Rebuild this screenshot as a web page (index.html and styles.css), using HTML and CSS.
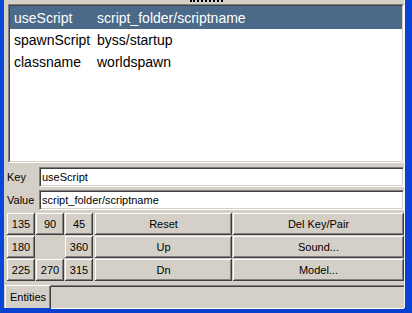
FILE: index.html
```html
<!DOCTYPE html>
<html lang="en">
<head>
    <meta charset="UTF-8">
    <title>Entities</title>
    <link rel="stylesheet" href="styles.css">
</head>
<body>
    <div class="window">
        <div class="client">
            <div class="grip"><span class="dots"></span></div>

            <div class="list">
                <div class="list-inner">
                    <div class="row selected"><span class="k">useScript</span><span>script_folder/scriptname</span></div>
                    <div class="row"><span class="k">spawnScript</span><span>byss/startup</span></div>
                    <div class="row"><span class="k">classname</span><span>worldspawn</span></div>
                </div>
            </div>

            <div class="field">
                <label for="key">Key</label>
                <input type="text" id="key" value="useScript">
            </div>
            <div class="field">
                <label for="val">Value</label>
                <input type="text" id="val" value="script_folder/scriptname">
            </div>

            <div class="buttons">
                <button class="btn">135</button>
                <button class="btn">90</button>
                <button class="btn">45</button>
                <button class="btn wide">Reset</button>
                <button class="btn">Del Key/Pair</button>

                <button class="btn">180</button>
                <span></span>
                <button class="btn">360</button>
                <button class="btn wide">Up</button>
                <button class="btn">Sound...</button>

                <button class="btn">225</button>
                <button class="btn">270</button>
                <button class="btn">315</button>
                <button class="btn wide">Dn</button>
                <button class="btn">Model...</button>
            </div>

            <div class="tabs">
                <div class="tab">Entities</div>
                <div class="tab-rest"></div>
            </div>
        </div>
    </div>
</body>
</html>
```

FILE: styles.css
```css
body {
    margin: 0;
    overflow: hidden;
    font-family: "Liberation Sans", Arial, sans-serif;
}
.window {
    width: 412px;
    height: 313px;
    box-sizing: border-box;
    background-color: #d4d0c8;
    border-left: 4px solid #0846d8;
    border-right: 7px solid #0843d6;
    border-bottom: 5px solid #0a3fd0;
}
.client {
    height: 100%;
    border-right: 1px solid #f4f3ee;
    display: flex;
    flex-direction: column;
}
.grip {
    height: 4px;
}
.dots {
    display: block;
    margin-left: 186px;
    width: 33px;
    border-top: 2px dotted #000;
}
.list {
    margin-left: 4px;
    height: 159px;
    box-sizing: border-box;
    border: 1px solid;
    border-color: #808080 #fff #fff #808080;
}
.list-inner {
    height: 100%;
    box-sizing: border-box;
    border: 1px solid;
    border-color: #404040 #d4d0c8 #d4d0c8 #404040;
    background-color: #fff;
}
.row {
    display: flex;
    height: 22px;
    align-items: center;
    padding-left: 4px;
    font-size: 14px;
    color: #000;
}
.row .k {
    width: 83px;
}
.row.selected {
    height: 23px;
    background-color: #4b6a8a;
    color: #fff;
}
.field {
    display: flex;
    align-items: center;
    height: 20px;
    margin-top: 4px;
    padding-left: 3px;
    font-size: 11px;
}
.field + .field {
    margin-top: 3px;
}
.field label {
    width: 32px;
}
.field input {
    flex: 1;
    height: 20px;
    box-sizing: border-box;
    margin: 0;
    padding: 0 0 0 2px;
    font-family: "Liberation Sans", Arial, sans-serif;
    font-size: 11px;
    color: #000;
    background-color: #fff;
    border: 1px solid;
    border-color: #808080 #fff #fff #808080;
    box-shadow: inset 1px 1px #404040, inset -1px -1px #d4d0c8;
    outline: none;
}
.buttons {
    display: grid;
    grid-template-columns: 28px 28px 28px 138px 1fr;
    grid-auto-rows: 22px;
    gap: 1px;
    margin-top: 3px;
    padding-left: 3px;
}
.btn {
    margin: 0;
    padding: 0;
    border: none;
    background-color: #d4d0c8;
    font-family: "Liberation Sans", Arial, sans-serif;
    font-size: 11px;
    color: #000;
    box-shadow: inset -1px -1px #404040, inset 1px 1px #fff, inset -2px -2px #808080;
}
.btn.wide {
    margin-left: 1px;
}
.tabs {
    display: flex;
    margin-top: 2px;
    height: 25px;
    padding-left: 1px;
}
.tab {
    margin-top: 2px;
    height: 22px;
    padding: 0 4px 0 4px;
    display: flex;
    align-items: center;
    font-size: 11px;
    border-left: 1px solid #fff;
    border-top: 1px solid #fff;
    border-right: 1px solid #404040;
    box-shadow: inset -1px 0 #808080;
}
.tab-rest {
    flex: 1;
    margin-top: 2px;
    height: 22px;
    border-top: 1px solid #808080;
    border-bottom: 1px solid #fff;
    box-shadow: inset 0 1px #404040;
}
```
